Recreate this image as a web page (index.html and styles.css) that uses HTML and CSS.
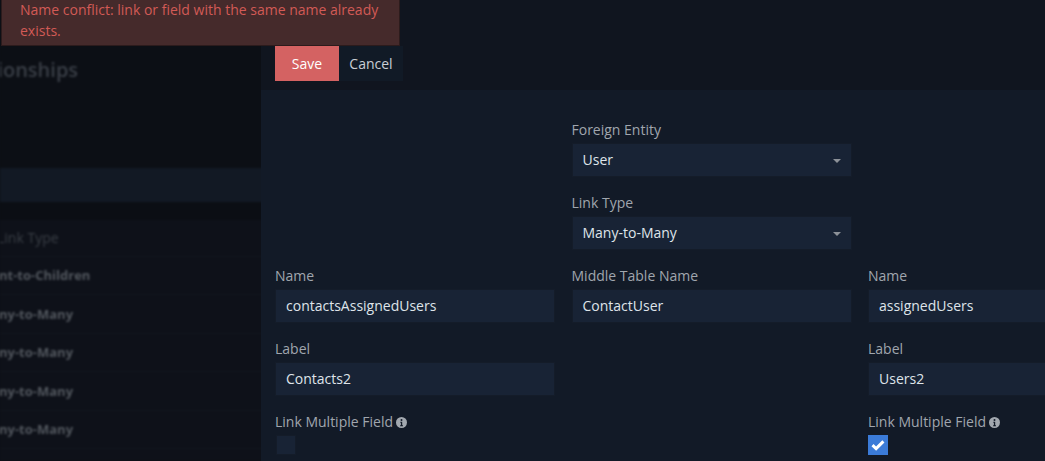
FILE: index.html
```html
<html>
<head>
<link rel="stylesheet" href="styles.css">
</head>
<body>

<div class="backdrop">
  <div class="bg-header"><h2>Relationships</h2></div>
  <div class="bg-band"></div>
  <div class="bg-gap"></div>
  <table class="bg-table">
    <tr><th>Link Type</th></tr>
    <tr><td>nt-to-Children</td></tr>
    <tr><td>ny-to-Many</td></tr>
    <tr><td>ny-to-Many</td></tr>
    <tr><td>ny-to-Many</td></tr>
    <tr><td>ny-to-Many</td></tr>
    <tr><td>ny-to-Many</td></tr>
  </table>
</div>

<div class="modal">
  <div class="modal-header">
    <button class="btn btn-danger">Save</button><button class="btn btn-plain">Cancel</button>
  </div>
  <div class="modal-body">
    <div class="cell"></div>
    <div class="cell">
      <label>Foreign Entity</label>
      <div class="select">User<span class="caret"></span></div>
    </div>
    <div class="cell"></div>

    <div class="cell"></div>
    <div class="cell">
      <label>Link Type</label>
      <div class="select">Many-to-Many<span class="caret"></span></div>
    </div>
    <div class="cell"></div>

    <div class="cell">
      <label>Name</label>
      <div class="input">contactsAssignedUsers</div>
    </div>
    <div class="cell">
      <label>Middle Table Name</label>
      <div class="input">ContactUser</div>
    </div>
    <div class="cell">
      <label>Name</label>
      <div class="input">assignedUsers</div>
    </div>

    <div class="cell">
      <label>Label</label>
      <div class="input">Contacts2</div>
    </div>
    <div class="cell"></div>
    <div class="cell">
      <label>Label</label>
      <div class="input">Users2</div>
    </div>

    <div class="cell">
      <label>Link Multiple Field <svg class="info" width="11" height="11" viewBox="0 0 11 11"><circle cx="5.5" cy="5.5" r="5.5" fill="#a2a8af"/><circle cx="5.5" cy="3" r="1" fill="#121a27"/><path d="M4.3 4.7h1.9v3.6h0.8v1h-2.9v-1h0.8v-2.6h-0.6z" fill="#121a27"/></svg></label>
      <div class="checkbox"></div>
    </div>
    <div class="cell"></div>
    <div class="cell">
      <label>Link Multiple Field <svg class="info" width="11" height="11" viewBox="0 0 11 11"><circle cx="5.5" cy="5.5" r="5.5" fill="#a2a8af"/><circle cx="5.5" cy="3" r="1" fill="#121a27"/><path d="M4.3 4.7h1.9v3.6h0.8v1h-2.9v-1h0.8v-2.6h-0.6z" fill="#121a27"/></svg></label>
      <div class="checkbox checked"><svg width="20" height="20" viewBox="0 0 20 20"><path d="M4.5 10.2l3.6 3.4l7.3-7.2" fill="none" stroke="#fff" stroke-width="3"/></svg></div>
    </div>
  </div>
</div>

<div class="alert">Name conflict: link or field with the same name already exists.</div>

</body>
</html>
```

FILE: styles.css
```css
body {
 margin: 0;
 background: #0d1017;
 font-family: "Open Sans", "Liberation Sans", sans-serif;
 font-size: 14px;
 overflow: hidden;
 width: 1045px;
 height: 461px;
}

/* page behind the modal */
.backdrop { height: 461px; overflow: hidden; filter: blur(1.2px); }
.bg-header { height: 168px; background: #0c0f15; overflow: hidden; }
.bg-header h2 {
 margin: 0;
 padding-top: 55px;
 margin-left: -52px;
 font-size: 20px;
 font-weight: 600;
 line-height: 30px;
 color: #3a3f47;
}
.bg-band { height: 34px; background: #121924; }
.bg-gap { height: 18px; background: #0b0e14; }
.bg-table { width: 100%; border-collapse: collapse; background: #0e1119; }
.bg-table th {
 height: 36px;
 padding: 0;
 text-align: left;
 text-indent: -3px;
 font-size: 14px;
 font-weight: 400;
 color: #3a3f46;
}
.bg-table td {
 height: 38.5px;
 padding: 0;
 text-indent: -1px;
 font-size: 13px;
 font-weight: 700;
 color: #52575e;
 border-top: 1px solid #12161e;
}

/* modal */
.modal {
 position: absolute;
 left: 261px;
 top: 0;
 right: 0;
 bottom: 0;
 background: #121a27;
}
.modal-header {
 padding: 46px 0 0 14px;
 box-sizing: border-box;
 height: 90px;
 background: #10151f;
}
.btn {
 height: 35px;
 width: 64px;
 border: 0;
 margin: 0;
 padding: 0;
 font-family: inherit;
 font-size: 14px;
 vertical-align: top;
}
.btn-danger { background: #d46262; color: #fff; }
.btn-plain { background: #111a26; color: #c9ced5; }

.modal-body {
 display: grid;
 grid-template-columns: 280px 280px 280px;
 grid-auto-rows: 57px;
 column-gap: 16.5px;
 row-gap: 16px;
 padding: 30px 0 0 14px;
}
label {
 display: block;
 height: 20px;
 line-height: 20px;
 margin-bottom: 3px;
 color: #a0a6ae;
 white-space: nowrap;
}
.info { vertical-align: -1px; margin-left: -1px; }
.input, .select {
 position: relative;
 height: 34px;
 line-height: 32px;
 box-sizing: border-box;
 padding-left: 10px;
 background: #182335;
 border: 1px solid #141c29;
 color: #dfe4ea;
}
.caret {
 position: absolute;
 right: 10px;
 top: 15px;
 border-left: 4px solid transparent;
 border-right: 4px solid transparent;
 border-top: 4px solid #8c9198;
}
.checkbox {
 width: 20px;
 height: 20px;
 margin-left: 1px;
 box-sizing: border-box;
 background: #182335;
 border: 1px solid #141c29;
}
.checkbox.checked { background: #3b7bd8; border: 0; margin-left: 0; }
.checkbox svg { display: block; }

/* error message */
.alert {
 position: absolute;
 left: 1px;
 top: -12px;
 width: 379px;
 padding: 10px 0 4px 18px;
 line-height: 21px;
 background: #452a2b;
 color: #d25a56;
 border: 1px solid #2c1b1c;
 font-size: 14px;
}
```
